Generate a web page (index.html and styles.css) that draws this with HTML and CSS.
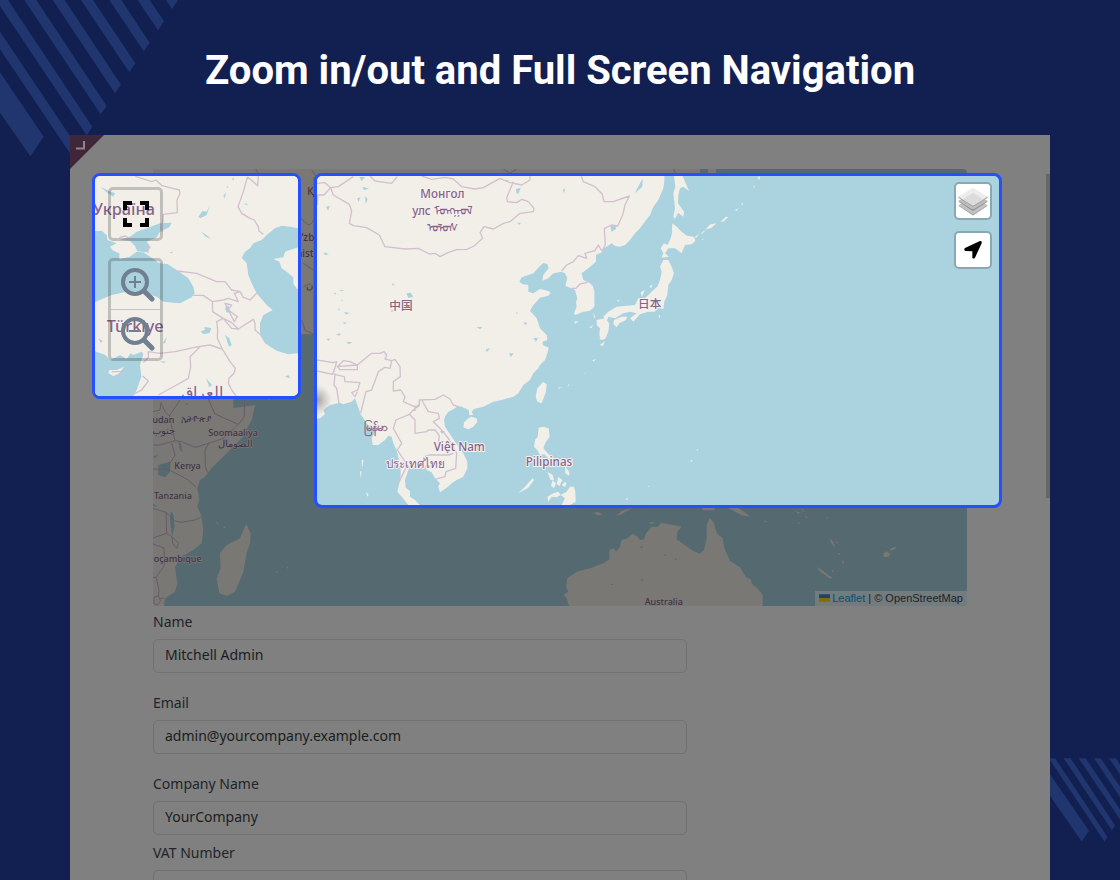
FILE: index.html
```html
<!DOCTYPE html>
<html lang="en">
<head>
<meta charset="utf-8">
<meta name="viewport" content="width=device-width, initial-scale=1">
<title>Zoom in/out and Full Screen Navigation</title>
<link rel="stylesheet" href="styles.css">
</head>
<body>
<svg class="stripes stripes-top" viewBox="0 0 540 480" aria-hidden="true">
  <path d="M498 0H534L516 27ZM413 0H449L492 64 474 91ZM328 0H364L449 128 431 154ZM243 0H279L406 190 388 217ZM158 0H194L363 254 345 280ZM73 0H109L320 318 302 343ZM-12 0H24L277 380 260 406ZM0 95 234 443 216 469 0 148ZM0 217 131 410 91 469 0 338Z"/>
</svg>
<svg class="stripes stripes-bottom" viewBox="150 54 210 260" aria-hidden="true">
  <path d="M146 54H165L322 290 313 304ZM191 54H212L345 256 336 271ZM236 54H257L360 208V238ZM282 54H302L360 140V171ZM327 54H348L360 73V103ZM150 102 267 272 245 304 150 167Z"/>
</svg>

<header class="hero"><h1>Zoom in/out and Full Screen Navigation</h1></header>

<main class="panel">
  <svg class="corner" viewBox="0 0 34 34" aria-hidden="true"><path class="corner-fill" d="M0 0H34L0 34Z"/><path class="corner-mark" d="M6 13.500H14V6"/></svg>
  <div class="scrollbar"></div>

  <div class="content">
    <section class="map" aria-label="World map">
      <svg class="map-art dim" viewBox="459 507 2442 1311" preserveAspectRatio="xMidYMid slice">
        <path class="land" d="M459 507H2100V531H940V1003H700V1230H459ZM2124 507H2148V531H2124Z"/>
        <g class="border">
          <path d="M767 507 775 520M935 510 950 530M1510 507 1530 520 1550 507M2020 507 2030 525M905 655Q930 695 945 650M910 860 930 850 945 870M905 960 915 990 945 1005M910 790 940 810"/>
        </g>
        <g class="label dim-label" font-size="30">
          <text x="922" y="586">Қазақстан</text><text x="881" y="724">O‘zbekiston</text><text x="888" y="770">nistan</text><text x="918" y="867">ایران</text>
        </g>
        <g transform="translate(420 1170)">
          <path class="land" d="M39 0H200L230 50 240 60 310 50 345 45 335 90 305 145 260 190 215 235 195 260 180 270 172 295 178 330 172 350 185 380 190 420 185 460 160 480 125 500 105 530 112 580 105 605 75 625 72 648H39ZM318 402 332 430 330 460 320 490 310 545 285 605 260 617 238 610 230 565 242 535 240 490 260 465 300 445Z"/>
          <path class="water" d="M55 225 90 215 90 245 75 262 55 255ZM115 155 122 160 128 187 120 180ZM92 365 99 370 104 410 96 440 90 390ZM39 340 52 352 40 348ZM312 145 322 140 320 160 308 160ZM110 0 122 0 118 15ZM134 40H145L141 46ZM40 200 55 192 45 205Z"/>
          <path class="border" d="M39 65 60 60 63 38 75 65 88 78 120 30M205 27 225 72 295 103 313 80 314 25M88 78 105 152 125 155 165 172 200 162 250 145 295 103M105 152 60 165 39 165M95 160 105 195 90 220 88 240 145 270 168 292M39 237 88 238M205 162 195 180 196 230 203 248M39 355 78 367 105 393 125 397 165 390 185 380M78 367 80 430 39 444M78 430 96 440 116 460 110 475 98 460 96 440M39 462 72 474 74 525 48 562 57 600 55 620M39 562 48 562M42 622 55 618 62 632 52 646 42 640ZM60 625H72"/>
          <g class="label dim-label" font-size="27">
            <text x="37" y="99">udan</text><text x="124" y="97">ኢትዮጵያ</text><text x="36" y="132" font-size="29">جنوب</text>
            <text x="205" y="139">Soomaaliya</text><text x="233" y="170" font-size="30">الصومال</text>
            <text x="103" y="236">Kenya</text><text x="42" y="327">Tanzania</text><text x="41" y="516">oçambique</text>
          </g>
          <path class="land" d="M407 542 414 545 410 550ZM440 530 446 533 442 536ZM379 24H397L387 29ZM229 392 236 405 230 401ZM250 408 257 414 251 413Z"/>
        </g>
        <g transform="translate(1620 1500)">
          <path class="land" d="M87 318 80 295 70 285 85 275 78 260 82 235 110 215 150 205 190 190 208 178 208 150 220 145 228 155 240 140 245 120 262 115 278 101 295 112 300 120 312 118 318 100 335 80 355 80 362 68 400 75 425 80 412 95 410 118 430 132 460 153 480 161 492 150 500 115 500 75 510 53 522 70 530 100 548 115 553 145 570 183 600 202 618 232 632 238 636 252 655 268 668 285 668 318ZM325 68 345 65 335 73ZM160 38 175 36 188 45 172 46ZM228 48 245 33 275 24 245 43ZM485 24H524V31H490ZM565 24H595L632 50 605 46ZM670 60 685 65 677 67Z"/>
          <path class="water" d="M300 139 311 140 304 144ZM212 252 222 251 217 256ZM300 238 312 239 305 243ZM403 176 412 176 407 181ZM372 162 379 165 374 168Z"/>
          <text class="label dim-label" x="314" y="316" font-size="27">Australia</text>
        </g>
        <g transform="translate(2340 1500)">
          <path class="land" d="M45 33 62 38 55 41ZM64 24 75 35 68 33ZM74 47 87 55 77 53ZM149 116 158 122 166 141 155 132ZM112 201 125 209 156 233 150 236 118 212ZM310 160 320 154 331 163 324 171 312 170ZM330 147 350 138 345 147 331 152ZM168 124 175 127 171 132ZM173 158 181 161 177 165ZM186 176 193 188 188 192ZM156 209 162 212 157 217ZM51 66 63 70 57 71ZM139 51 145 53 141 56Z"/>
        </g>
      </svg>
      <div class="attribution">
        <svg class="flag" viewBox="0 0 12 8" aria-hidden="true"><path fill="#263f72" d="M0 0H12V4H0Z"/><path fill="#806e00" d="M0 4H12V8H0Z"/></svg><a href="#leaflet">Leaflet</a> | © OpenStreetMap
      </div>
    </section>

    <form class="form">
      <label for="name">Name</label>
      <input id="name" type="text" value="Mitchell Admin">
      <label for="email">Email</label>
      <input id="email" type="email" value="admin@yourcompany.example.com">
      <label for="company">Company Name</label>
      <input id="company" class="tight" type="text" value="YourCompany">
      <label for="vat">VAT Number</label>
      <input id="vat" type="text">
    </form>
  </div>

  <div class="callout callout-zoom">
    <svg class="map-art" viewBox="45 48 609 660" preserveAspectRatio="xMidYMid slice">
      <path class="land" d="M45 48H654V708H45Z"/>
      <path class="water" d="M45 213 65 212 80 225 82 240 110 250 90 260 100 272 118 280 118 298 150 290 170 275 190 277 225 300 238 310 262 312 290 330 325 355 340 380 344 400 335 412 300 430 250 425 230 410 180 395 140 395 95 405 45 426ZM120 240 150 230 170 215 200 205 240 190 275 188 268 202 240 215 230 232 200 245 212 262 200 277 172 274 165 258 150 243ZM654 205 630 200 605 197 585 205 560 225 545 240 520 250 510 265 495 275 485 293 500 310 505 345 515 370 530 400 560 435 578 450 550 465 540 490 540 525 555 550 590 572 625 583 654 580V390L640 372 640 352 620 335 605 325 598 305 580 297 610 292 615 275 654 262ZM45 574 75 584 90 600 108 592 120 585 140 597 152 580 160 585 185 575 190 583 180 615 184 650 170 690 160 708H45ZM355 170 368 153 380 155 390 135 380 165 370 170 360 175ZM362 215 375 222 395 238 378 230ZM362 514 375 510 373 500 394 505 388 520 370 522ZM435 525 448 535 455 555 447 560ZM378 655 396 675 388 682ZM435 445 445 435 450 455 440 458ZM62 80 85 92 105 100 100 110 80 97ZM615 650 625 645 630 655ZM492 133 498 130 505 135ZM455 62 460 50 462 57ZM438 84 443 78 446 82ZM430 108 438 97 435 115ZM268 278 280 274 275 280ZM240 603 258 605 250 609ZM55 535 68 543 62 549ZM248 550 260 530 256 550Z"/>
      <path class="land" d="M88 630 110 630 132 620 118 640 100 648 85 640Z"/>
      <path class="border" d="M166 49 215 65 228 60 246 77 298 90 300 100 291 120 292 158 250 163 247 215M502 50 533 77 535 48M502 52 490 95 474 140 485 160 510 175 523 180 535 200 537 213 550 223M293 333 350 340 410 365 435 365 455 390 480 395 490 412 510 420 530 400M340 406 370 406 397 425 430 420 445 415 475 425 463 400 480 395M397 425 398 455 430 475 455 505 475 507 520 478 525 490 525 510 540 523M430 475 410 485 413 510 412 535 427 567 450 605 466 625 462 640 447 655 445 670 455 690 468 708M430 475 455 488 475 507M463 485 450 460 435 430 455 435 445 450 472 470ZM190 608 205 592 205 575 240 580 285 575 355 560 390 555 425 567M360 560 330 590 332 620 325 655 290 675 235 705M188 648 205 663 185 690 160 703M118 233 135 228 158 240M204 252V278M95 635 130 635M640 395 654 388M645 487H654"/>
      <g class="label" font-size="49">
        <text x="38" y="165">Україна</text><text x="80" y="515">Türkiye</text><text x="304" y="714">العراق</text>
      </g>
    </svg>
    <div class="controls controls-left">
      <button class="tool-large" type="button" aria-label="Full screen">
        <svg class="icon-full" viewBox="0 0 26 26" aria-hidden="true"><path d="M2 9V2H9M17 2H24V9M24 17V24H17M9 24H2V17"/></svg>
      </button>
      <div class="zoom-group">
        <button class="tool-zoom" type="button" aria-label="Zoom in">
          <svg class="icon-zoom" viewBox="0 0 34 34" aria-hidden="true"><circle cx="14" cy="14" r="12"/><path class="handle" d="M23 23 31 31"/><path class="sign" d="M8 14H20M14 8V20"/></svg>
        </button>
        <button class="tool-zoom" type="button" aria-label="Zoom out">
          <svg class="icon-zoom" viewBox="0 0 34 34" aria-hidden="true"><circle cx="14" cy="14" r="12"/><path class="handle" d="M23 23 31 31"/><path class="sign" d="M8 14H20"/></svg>
        </button>
      </div>
    </div>
  </div>

  <div class="callout callout-full">
    <svg class="map-art" viewBox="21 33 2046 987" preserveAspectRatio="xMidYMid slice">
      <defs><radialGradient id="smudge"><stop offset="0" stop-color="#777" stop-opacity=".7"/><stop offset="1" stop-color="#999" stop-opacity="0"/></radialGradient></defs>
      <path class="land" d="M0 0H1063V50L1060 70 1045 105 1030 125 1020 150 990 190 975 205 960 225 945 240 930 245 915 243 905 235 890 245 880 250 876 262 858 270 858 290 835 310 815 325 820 345 840 355 848 362 853 380 853 425 840 437 820 440 795 450 792 445 800 425 798 410 802 400 795 375 780 368 766 362 772 340 765 325 755 320 730 325 715 340 697 347 700 330 716 310 712 297 700 294 688 305 670 325 635 337 628 350 638 358 655 360 655 380 670 385 690 372 715 378 722 383 715 392 690 398 670 420 660 437 680 460 690 490 710 510 712 525 698 530 698 540 716 548 712 565 705 585 690 600 685 610 670 625 660 645 640 660 625 685 610 695 575 705 550 710 520 725 492 732 485 740 490 750 478 750 476 735 455 725 445 723 430 733 415 740 405 755 402 765 405 785 415 800 435 830 450 850 460 865 472 890 472 910 460 935 440 945 425 955 410 968 390 982 385 965 390 955 375 940 365 922 350 915 345 900 330 910 315 895 300 900 290 930 285 945 287 968 300 978 300 995 315 1005 330 1020H295L275 995 262 980 268 955 272 930 272 910 260 855 250 835 245 815 235 812 225 825 205 840 188 840 185 820 195 800 170 775 150 745 148 735 140 715 135 700 125 710 100 718 90 713 60 720 40 735 45 747 30 760 0 765Z"/>
      <path class="land" d="M485 755 500 760 502 770 490 785 475 793 460 787 462 772 475 760ZM700 650 710 658 708 680 695 715 682 710 677 695 682 670ZM686 788 700 785 716 790 719 815 707 832 700 850 710 862 723 875 718 882 703 868 690 870 682 855 672 845 675 825 683 815ZM712 920 728 930 732 945 722 945ZM728 945 738 955 732 970 723 962ZM745 935 757 945 748 963 740 957ZM765 905 778 920 777 932 766 925ZM668 940 672 945 655 968 625 985 645 965ZM712 995 730 985 745 980 752 990 740 997 725 995 715 1010ZM752 990 770 980 780 965 792 965 796 980 797 1010 780 1020H755L765 1000ZM755 960 765 950 770 955 765 966Z"/>
      <g transform="translate(690 0)">
        <path class="land" d="M402 33H428L435 50 447 78 430 65 420 70 415 90 414 115 432 140 430 155 414 143 405 162 400 155 405 130 400 85 406 65ZM397 175 410 185 425 200 440 212 462 215 466 228 455 238 435 240 425 265 405 250 385 250 375 265 387 275 365 278 370 265 362 250 372 235 382 240 390 225 395 210ZM370 285 385 285 395 305 402 325 395 345 385 360 382 390 373 410 370 432 350 428 345 440 325 440 300 448 280 470 270 460 290 445 270 440 250 445 225 460 205 455 200 470 190 455 205 440 230 425 260 422 285 420 295 400 315 400 340 375 352 365 360 345 365 320 360 305ZM222 465 245 455 262 455 258 465 238 475 230 487 220 478ZM170 465 195 460 208 475 205 500 195 522 185 520 178 510 180 490 170 480ZM302 382 315 375 306 395ZM328 365 337 358 334 370ZM103 470 117 468 105 477ZM148 488 162 477 153 490ZM160 442 166 458 162 458ZM178 510 190 510 200 513 195 522 182 520ZM465 215 480 205 467 220ZM484 203 500 193 485 208ZM496 193 511 178 530 175 512 190ZM542 170 558 155 565 156 550 170ZM485 225 495 220 488 226ZM585 135 595 130 590 138ZM603 117 611 113 606 121ZM640 66 645 59 642 70ZM652 40 658 33 660 44ZM355 450 361 452 359 460ZM230 407 240 404 234 410Z"/>
        <path class="land" d="M178 520 200 510 190 524 182 524ZM180 540 195 528 188 544ZM157 586 168 582 160 590ZM128 631 143 617 137 624ZM53 668 66 665 56 671ZM82 660 88 658 87 663ZM469 854 475 852 472 858ZM450 887 458 885 455 891ZM257 1001 264 999 261 1006ZM324 962 330 964 326 966Z"/>
      </g>
      <path class="land" d="M155 885H161L156 910ZM150 918 155 920 152 940ZM168 980 176 990 172 995Z"/>
      <path class="water" d="M148 36H165L155 48ZM156 66 177 70 163 76ZM142 100 152 97 145 110ZM165 92 173 103 167 117ZM48 125 60 123 54 137ZM41 262 57 267 45 271ZM245 355 254 357 249 362ZM289 385 302 383 310 395 295 399ZM618 72 632 68 625 88 619 83ZM622 173 633 174 627 180ZM585 44 597 45 590 50ZM900 182 920 180 917 193 905 200ZM982 70 998 40 997 65 975 85ZM71 385 79 383 76 389ZM88 375 102 375 95 379ZM92 404 99 404 96 409ZM85 430 91 434 86 437ZM103 441 118 443 108 449ZM98 474 110 470 105 478ZM78 508 92 505 88 513ZM50 522 62 520 55 528ZM108 530 127 532 116 538ZM640 470 653 475 645 479ZM618 441 625 445 620 447ZM670 520 685 518 678 530ZM500 486 517 486 510 493ZM597 565 611 565 603 576ZM528 552 541 550 530 562ZM390 798H405L396 807ZM758 75 765 70 763 85ZM240 437 254 435 246 441Z"/>
      <path class="border" d="M21 55 45 53 62 68 85 65 130 35M21 120 24 90 42 90 62 68 70 90 118 118 125 138 118 175 130 182 170 188 208 210 225 245 285 252 325 250 358 267 375 265 390 275 415 262 440 254 470 253 492 243 518 220 510 202 522 185 550 192 580 175 600 170 630 145 670 140 672 130 655 110 635 103 620 113 592 110 590 98 610 50M180 33 195 48 245 55 262 35M335 33 365 43 405 37 430 42 455 65 495 72 520 68 570 40 600 53 635 60 660 45V33M814 33 820 50 855 65 877 88 882 110 910 110 958 93 945 120 938 150 923 183 905 180 883 190 886 240 876 258 865 240 855 257 825 265 830 280 805 272 790 290 770 300 755 318M785 370 798 370 810 357 832 352M21 585 70 593 80 590 75 608 68 628 21 618M82 605 100 587 120 590 142 600V614H90ZM75 608 80 590M80 605 142 600 185 565 210 565 222 560 230 570 225 582 245 587 240 610 225 607 205 620 185 675 168 680 152 745M72 628 103 635 105 650 150 653 143 675 125 683 135 695 142 680M75 625 72 660 80 670 87 715M245 587 255 583 270 605 271 635 250 650 250 678 272 675 285 695 280 710 320 728 328 722 328 705 375 703 400 690 420 702 430 720 445 725M335 705 355 740 385 745 388 760 370 770 395 795 415 820 440 865 437 910 408 920 405 935 375 943M330 715 298 748 258 765 250 790 275 835 262 855 285 890 287 910 265 955M298 748 315 765 315 805 350 800 355 795 375 795 388 812 385 840M345 875 357 870 415 870 430 865M315 722V738"/>
      <ellipse cx="20" cy="705" rx="46" ry="46" fill="url(#smudge)"/>
      <g class="label" font-size="35">
        <text x="331" y="98">Монгол</text><text x="307" y="149">улс ᠮᠣᠩᠭᠣᠯ</text><text x="352" y="200">ᠤᠯᠤᠰ</text>
        <text x="238" y="436">中国</text><text x="984" y="429">日本</text>
        <text class="plain" x="162" y="797">မြန်မာ</text><text x="371" y="857">Việt Nam</text><text x="229" y="910">ประเทศไทย</text><text x="647" y="902">Pilipinas</text>
      </g>
    </svg>
    <div class="controls controls-right">
      <button class="tool" type="button" aria-label="Layers">
        <svg class="icon-layers" viewBox="0 0 90 86" aria-hidden="true"><path fill="#a0a0a0" d="M1 56 15 48 45 67 75 48 89 56 45 85Z"/><path fill="#c4c4c4" d="M1 54 15 46 45 64 75 46 89 54 45 81Z"/><path fill="#929292" d="M1 43 15 36 45 54 75 36 89 43 45 72Z"/><path fill="#bdbdbd" d="M1 41 15 34 45 51 75 34 89 41 45 68Z"/><path fill="#999" d="M1 29H89V32L45 59 1 32Z"/><path fill="#ececec" d="M45 2 89 29 45 56 1 29Z"/><path fill="#dcdcdc" d="M45 17 76 36 45 55 14 36Z"/></svg>
      </button>
      <button class="tool" type="button" aria-label="My location">
        <svg class="icon-arrow" viewBox="0 0 54 54" aria-hidden="true"><path d="M48 0Q55 0 53 7L33 50Q30 55 25 51V31L4 30Q-2 26 3 21Z"/></svg>
      </button>
    </div>
  </div>
</main>
</body>
</html>
```
FILE: styles.css
```css
* { box-sizing: border-box; }

body {
  position: relative;
  display: flex;
  flex-direction: column;
  height: 100vh;
  margin: 0;
  overflow: hidden;
  background: #112051;
  font-family: "Noto Sans", "Open Sans", sans-serif;
}

.stripes { position: absolute; fill: #21366f; }
.stripes-top { top: 0; left: 0; width: 180px; height: 160px; }
.stripes-bottom { right: 0; bottom: 35px; width: 70px; height: 87px; }

.hero { padding: 47px 24px 40px; text-align: center; }
.hero h1 {
  margin: 0;
  color: #fff;
  font: 700 40px/48px Roboto, sans-serif;
}

.panel {
  position: relative;
  flex: 1;
  min-height: 0;
  margin: 0 70px;
  background: #808080;
}
.content {
  height: 100%;
  padding: 34px 83px 0;
  overflow: hidden;
}

.corner { position: absolute; top: 0; left: 0; width: 34px; height: 34px; }
.corner-fill { fill: #402639; }
.corner-mark { fill: none; stroke: #8c8589; stroke-width: 2; }
.scrollbar {
  position: absolute;
  top: 39px;
  right: 0;
  width: 4px;
  height: 324px;
  background: #666;
}

.map {
  position: relative;
  height: 437px;
  overflow: hidden;
  border-radius: 4px;
  background: #556a70;
}
.map-art { display: block; width: 100%; height: 100%; }
.land { fill: #f2efe9; }
.water { fill: #aad3df; }
.border { fill: none; stroke: #d3c0cf; stroke-width: 4; stroke-linejoin: round; }
.label {
  fill: #876386;
  stroke: #f5f1f1;
  stroke-width: 6px;
  stroke-linejoin: round;
  paint-order: stroke;
  font-family: "Noto Sans", "Noto Sans CJK SC", sans-serif;
  font-weight: 500;
}
.plain { stroke-width: 1px; stroke: #876386; }
.dim .land { fill: #797874; }
.dim .water { fill: #556a70; }
.dim .border { stroke: #675c68; stroke-width: 3; }
.dim .dim-label { fill: #433244; stroke: #7b7977; stroke-width: 4px; }

.attribution {
  position: absolute;
  right: 0;
  bottom: 0;
  padding: 0 4px;
  background: #727b7e;
  color: #1f1f1f;
  font: 11px/15px "Liberation Sans", Arial, sans-serif;
}
.attribution a { color: #0b5069; text-decoration: none; }
.flag { width: 11px; height: 8px; margin-right: 2px; }

.form {
  display: flex;
  flex-direction: column;
  width: 65.6%;
  padding-top: 4px;
}
.form label {
  margin-bottom: 5px;
  color: #212428;
  font-size: 14px;
  line-height: 24px;
}
.form input {
  height: 34px;
  margin-bottom: 18px;
  padding: 0 11px 3px;
  border: 1px solid #707173;
  border-radius: 5px;
  background: transparent;
  color: #1b1d20;
  font: 14px/20px "Noto Sans", "Open Sans", sans-serif;
}
.form .tight { margin-bottom: 6px; }

.callout {
  position: absolute;
  top: 38px;
  overflow: hidden;
  border: 3px solid #2450ff;
  border-radius: 8px;
  background: #aad3df;
}
.callout-zoom { left: 22px; width: 209px; height: 226px; }
.callout-full { right: 48px; left: 244px; height: 335px; }

.controls { position: absolute; display: flex; flex-direction: column; }
.controls-left { top: 11px; left: 13px; gap: 17px; }
.controls-right { top: 6px; right: 7px; gap: 11px; }
.controls button {
  display: flex;
  align-items: center;
  justify-content: center;
  padding: 0;
}
.controls .tool-large, .zoom-group {
  width: 55px;
  border: 3px solid rgba(0, 0, 0, .2);
  border-radius: 5px;
  background: transparent;
}
.controls .tool-large { height: 54px; }
.zoom-group { height: 103px; }
.controls .tool-zoom {
  width: 100%;
  height: 48px;
  padding-left: 4px;
  border: 0;
  background: transparent;
}
.controls .tool-zoom:first-child { height: 49px; border-bottom: 1px solid #c0c4c8; }
.controls .tool {
  width: 38px;
  height: 38px;
  border: 2px solid rgba(0, 0, 0, .2);
  border-radius: 5px;
  background: #fff;
  background-clip: padding-box;
}

.icon-full { width: 26px; height: 26px; fill: none; stroke: #000; stroke-width: 4; }
.icon-zoom { width: 34px; height: 34px; fill: none; stroke: #708090; }
.icon-zoom circle { stroke-width: 4; }
.icon-zoom .handle { stroke-width: 5; stroke-linecap: round; }
.icon-zoom .sign { stroke-width: 2; }
.icon-layers { width: 30px; height: 29px; }
.icon-arrow { width: 18px; height: 18px; }
```
